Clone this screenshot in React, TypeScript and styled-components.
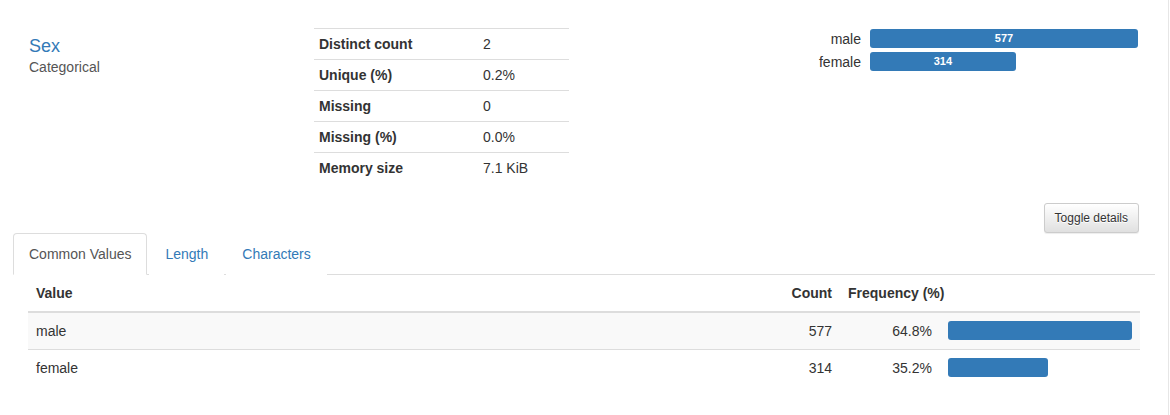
import React from "react";
import styled, { createGlobalStyle } from "styled-components";

const Global = createGlobalStyle`
  html, body { margin: 0; padding: 0; background: #fff; }
  body {
    font-family: "Liberation Sans", Arial, Helvetica, sans-serif;
    font-size: 14px;
    line-height: 20px;
    color: #333;
  }
  * { box-sizing: border-box; }
`;

const Page = styled.div`
  width: 1169px;
  min-height: 415px;
  border-right: 1px solid #e6e6e6;
`;

const Overview = styled.section`
  display: grid;
  grid-template-columns: 314px 255px 1fr;
  padding-top: 28px;
  padding-right: 29px;
`;

const TitleBlock = styled.div`
  padding-left: 29px;
  padding-top: 9px;
`;

const VarName = styled.div`
  font-size: 18px;
  line-height: 19.8px;
  color: #337ab7;
`;

const VarType = styled.div`
  font-size: 14px;
  line-height: 20px;
  color: #555;
`;

const StatsTable = styled.table`
  border-collapse: collapse;
  width: 255px;
  align-self: start;
`;

const StatRow = styled.tr`
  border-top: 1px solid #ddd;
`;

const StatLabel = styled.th`
  text-align: left;
  font-weight: bold;
  padding: 5px;
  width: 164px;
  line-height: 20px;
`;

const StatValue = styled.td`
  padding: 5px;
  line-height: 20px;
`;

const Chart = styled.div`
  justify-self: end;
  align-self: start;
  display: grid;
  grid-template-columns: auto 268px;
  column-gap: 9px;
  row-gap: 3px;
  padding-top: 1px;
  padding-right: 1px;
`;

const ChartLabel = styled.div`
  text-align: right;
  font-size: 14px;
  line-height: 20px;
  color: #333;
`;

const ChartBar = styled.div`
  height: 19px;
  background: #337ab7;
  border-radius: 3px;
  color: #fff;
  font-weight: bold;
  font-size: 11px;
  line-height: 19px;
  text-align: center;
`;

const ToggleRow = styled.div`
  display: flex;
  justify-content: flex-end;
  padding-right: 29px;
  margin-top: 20px;
`;

const ToggleButton = styled.button`
  font-family: inherit;
  font-size: 12px;
  line-height: 18px;
  padding: 5px 10px;
  color: #333;
  border: 1px solid #ccc;
  border-radius: 3px;
  background-image: linear-gradient(to bottom, #fff 0, #e0e0e0 100%);
  box-shadow: inset 0 1px 0 rgba(255, 255, 255, 0.15), 0 1px 1px rgba(0, 0, 0, 0.075);
  text-shadow: 0 1px 0 #fff;
  cursor: pointer;
`;

const Details = styled.div`
  padding: 0 13px 0 13px;
`;

const Tabs = styled.ul`
  display: flex;
  list-style: none;
  margin: 0;
  padding: 0;
  border-bottom: 1px solid #ddd;
`;

const TabItem = styled.li`
  margin-right: 2px;
  margin-bottom: -1px;
`;

const TabLink = styled.a<{ $active?: boolean }>`
  display: block;
  padding: 10px 15px;
  line-height: 20px;
  border: 1px solid ${(p) => (p.$active ? "#ddd" : "transparent")};
  border-bottom-color: ${(p) => (p.$active ? "#fff" : "transparent")};
  border-radius: 4px 4px 0 0;
  background: #fff;
  color: ${(p) => (p.$active ? "#555" : "#337ab7")};
  text-decoration: none;
  cursor: pointer;
`;

const TabContent = styled.div`
  padding: 0 15px;
`;

const FreqTable = styled.table`
  width: 100%;
  border-collapse: collapse;
  table-layout: fixed;
`;

const HeadCell = styled.th<{ $right?: boolean }>`
  padding: 8px;
  line-height: 20px;
  font-weight: bold;
  text-align: ${(p) => (p.$right ? "right" : "left")};
  border-bottom: 2px solid #ddd;
`;

const BodyRow = styled.tr<{ $striped?: boolean }>`
  background: ${(p) => (p.$striped ? "#f9f9f9" : "#fff")};
  border-top: 1px solid #ddd;
`;

const Cell = styled.td<{ $right?: boolean }>`
  padding: 8px;
  line-height: 20px;
  text-align: ${(p) => (p.$right ? "right" : "left")};
  vertical-align: middle;
`;

const FreqBar = styled.div`
  height: 19px;
  margin-top: -2px;
  background: #337ab7;
  border-radius: 3px;
`;

const stats: [string, string][] = [
  ["Distinct count", "2"],
  ["Unique (%)", "0.2%"],
  ["Missing", "0"],
  ["Missing (%)", "0.0%"],
  ["Memory size", "7.1 KiB"],
];

const values = [
  { label: "male", count: 577, pct: "64.8%" },
  { label: "female", count: 314, pct: "35.2%" },
];

const maxCount = Math.max(...values.map((v) => v.count));

export default function App() {
  return (
    <Page>
      <Global />
      <Overview>
        <TitleBlock>
          <VarName>Sex</VarName>
          <VarType>Categorical</VarType>
        </TitleBlock>
        <StatsTable>
          <tbody>
            {stats.map(([k, v]) => (
              <StatRow key={k}>
                <StatLabel>{k}</StatLabel>
                <StatValue>{v}</StatValue>
              </StatRow>
            ))}
          </tbody>
        </StatsTable>
        <Chart>
          {values.map((v) => (
            <React.Fragment key={v.label}>
              <ChartLabel>{v.label}</ChartLabel>
              <div>
                <ChartBar style={{ width: `${(v.count / maxCount) * 100}%` }}>{v.count}</ChartBar>
              </div>
            </React.Fragment>
          ))}
        </Chart>
      </Overview>
      <ToggleRow>
        <ToggleButton>Toggle details</ToggleButton>
      </ToggleRow>
      <Details>
        <Tabs>
          <TabItem>
            <TabLink $active>Common Values</TabLink>
          </TabItem>
          <TabItem>
            <TabLink>Length</TabLink>
          </TabItem>
          <TabItem>
            <TabLink>Characters</TabLink>
          </TabItem>
        </Tabs>
        <TabContent>
          <FreqTable>
            <colgroup>
              <col />
              <col style={{ width: 99 }} />
              <col style={{ width: 100 }} />
              <col style={{ width: 200 }} />
            </colgroup>
            <thead>
              <tr>
                <HeadCell>Value</HeadCell>
                <HeadCell $right>Count</HeadCell>
                <HeadCell colSpan={2}>Frequency (%)</HeadCell>
              </tr>
            </thead>
            <tbody>
              {values.map((v, i) => (
                <BodyRow key={v.label} $striped={i % 2 === 0}>
                  <Cell>{v.label}</Cell>
                  <Cell $right>{v.count}</Cell>
                  <Cell $right>{v.pct}</Cell>
                  <Cell>
                    <FreqBar style={{ width: `${(v.count / maxCount) * 100}%` }} />
                  </Cell>
                </BodyRow>
              ))}
            </tbody>
          </FreqTable>
        </TabContent>
      </Details>
    </Page>
  );
}
